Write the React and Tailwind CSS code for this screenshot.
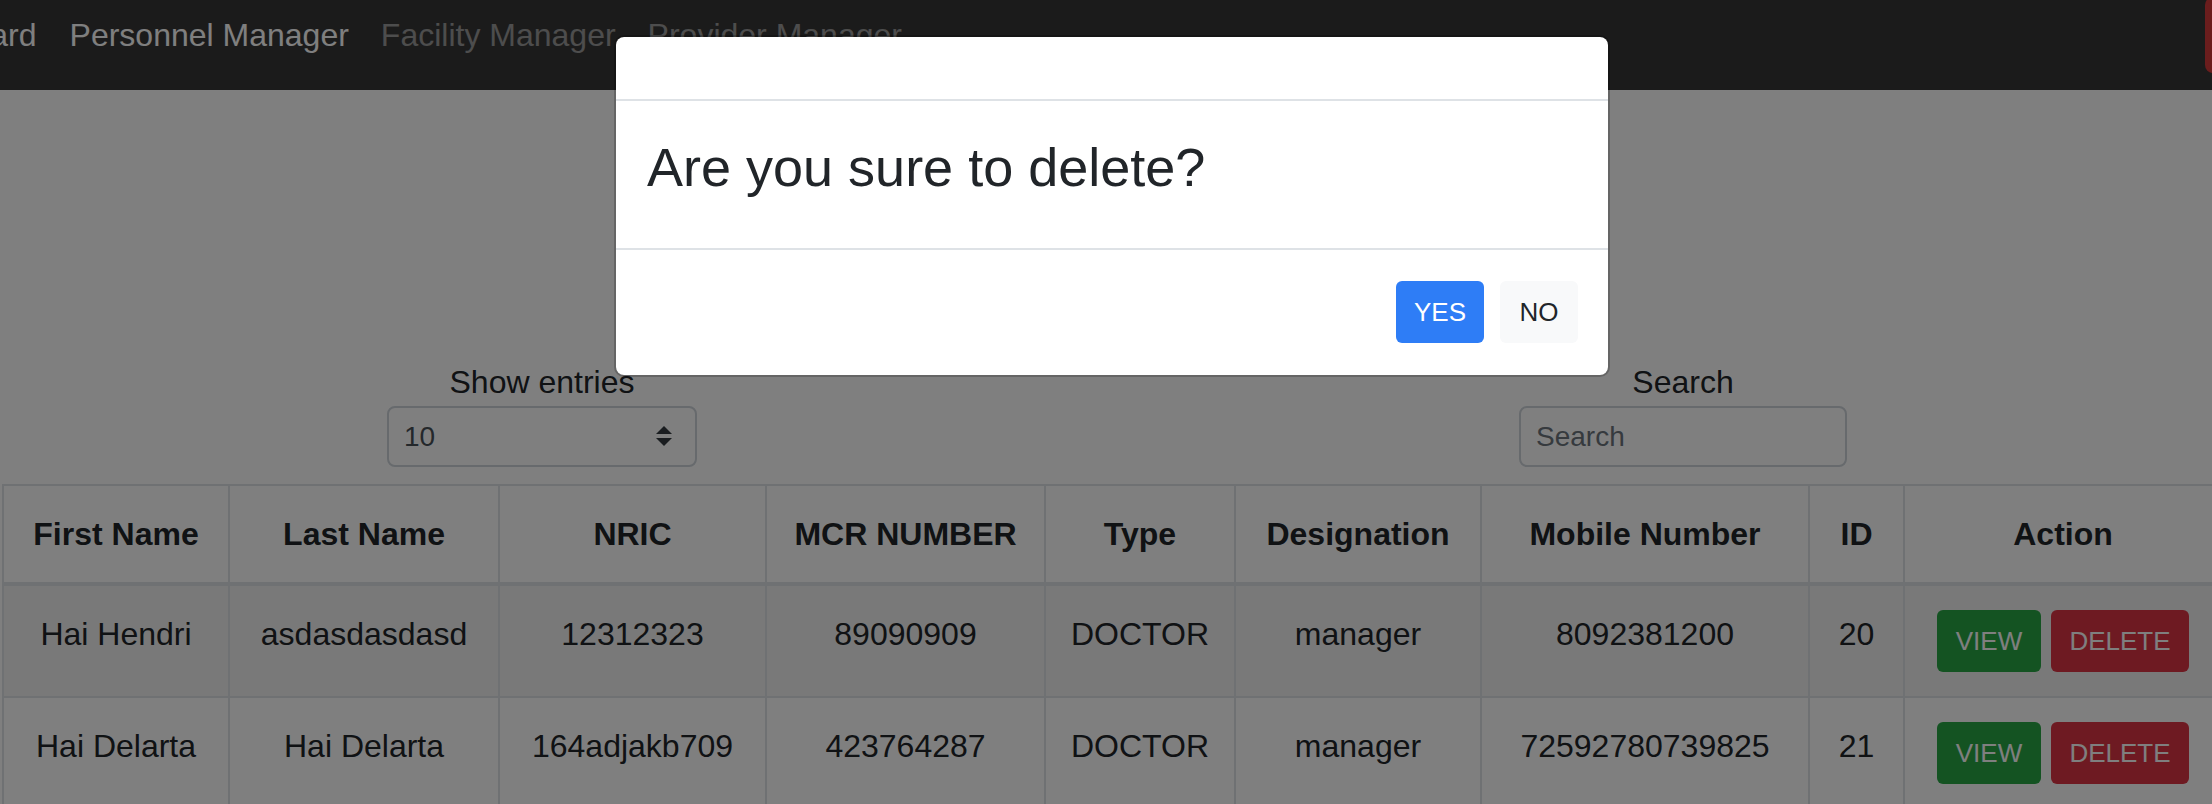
const rows = [
  {
    first: "Hai Hendri",
    last: "asdasdasdasd",
    nric: "12312323",
    mcr: "89090909",
    type: "DOCTOR",
    designation: "manager",
    mobile: "8092381200",
    id: 20,
  },
  {
    first: "Hai Delarta",
    last: "Hai Delarta",
    nric: "164adjakb709",
    mcr: "423764287",
    type: "DOCTOR",
    designation: "manager",
    mobile: "72592780739825",
    id: 21,
  },
];

const columns = [
  { label: "First Name", w: "w-[226px]" },
  { label: "Last Name", w: "w-[270px]" },
  { label: "NRIC", w: "w-[267px]" },
  { label: "MCR NUMBER", w: "w-[279px]" },
  { label: "Type", w: "w-[190px]" },
  { label: "Designation", w: "w-[246px]" },
  { label: "Mobile Number", w: "w-[328px]" },
  { label: "ID", w: "w-[95px]" },
  { label: "Action", w: "w-[318px]" },
];

function Navbar() {
  return (
    <nav className="h-[90px] bg-[#363636] flex items-start pt-[11px] overflow-hidden text-[32px] leading-[48px]">
      {/* Brand + links, page is scrolled a little to the right */}
      <div className="flex -ml-[120px] whitespace-nowrap">
        <span className="text-white pr-[17px]">Dashboard</span>
        <span className="text-white px-[16px]">Personnel Manager</span>
        <span className="text-white/50 px-[16px]">Facility Manager</span>
        <span className="text-white/50 px-[16px]">Provider Manager</span>
      </div>
      {/* Logout button, mostly off screen */}
      <div className="ml-auto -mr-[53px] -mt-[14px] w-[60px] h-[76px] rounded-[8px] bg-[#d63a3a] shrink-0" />
    </nav>
  );
}

function Controls() {
  return (
    <div className="flex items-start text-[#212529]">
      <div className="ml-[387px] w-[310px] flex flex-col items-center">
        <label className="text-[32px] leading-[48px]">Show entries</label>
        <div className="w-full h-[61px] border-2 border-[#ced4da] rounded-[8px] bg-white flex items-center justify-between pl-[15px] pr-[23px] text-[28px] text-[#495057]">
          <span>10</span>
          <svg width="16" height="21" viewBox="0 0 16 21">
            <path d="M8 0 L16 8 L0 8 Z" fill="#343a40" />
            <path d="M0 12 L16 12 L8 20 Z" fill="#343a40" />
          </svg>
        </div>
      </div>
      <div className="ml-[822px] w-[328px] flex flex-col items-center">
        <label className="text-[32px] leading-[48px]">Search</label>
        <div className="w-full h-[61px] border-2 border-[#ced4da] rounded-[8px] bg-white flex items-center pl-[15px] text-[28px] text-[#6c757d]">
          Search
        </div>
      </div>
    </div>
  );
}

function PersonnelTable() {
  return (
    <table className="mt-[17px] ml-[2px] w-[2220px] table-fixed border-collapse text-[32px] leading-[48px] text-[#212529]">
      <thead>
        <tr>
          {columns.map((c) => (
            <th
              key={c.label}
              className={`${c.w} p-[24px] border-2 border-b-4 border-[#dee2e6] font-bold text-center align-bottom whitespace-nowrap`}
            >
              {c.label}
            </th>
          ))}
        </tr>
      </thead>
      <tbody>
        {rows.map((r, i) => (
          <tr key={r.id} className={i % 2 === 0 ? "bg-black/5" : ""}>
            {[r.first, r.last, r.nric, r.mcr, r.type, r.designation, r.mobile, r.id].map((v, j) => (
              <td key={j} className="p-[24px] border-2 border-[#dee2e6] text-center align-top whitespace-nowrap">
                {v}
              </td>
            ))}
            <td className="p-[24px] border-2 border-[#dee2e6] text-center align-top">
              <div className="inline-flex gap-[10px]">
                <button className="w-[104px] h-[62px] rounded-[6px] bg-[#28a745] text-white text-[26px] leading-none">
                  VIEW
                </button>
                <button className="w-[138px] h-[62px] rounded-[6px] bg-[#dc3545] text-white text-[26px] leading-none">
                  DELETE
                </button>
              </div>
            </td>
          </tr>
        ))}
      </tbody>
    </table>
  );
}

function ConfirmModal() {
  return (
    <div className="absolute top-[35px] left-[614px] w-[996px] bg-white rounded-[10px] border-2 border-black/20 bg-clip-padding">
      {/* Empty header */}
      <div className="h-[64px] border-b-2 border-[#dee2e6]" />

      {/* Body */}
      <div className="pt-[34px] pb-[32px] px-[31px]">
        <h3 className="text-[54px] leading-[1.2] mb-[16px] text-[#212529]">Are you sure to delete?</h3>
      </div>

      {/* Footer */}
      <div className="border-t-2 border-[#dee2e6] flex justify-end gap-[16px] pt-[31px] pb-[32px] pr-[30px]">
        <button className="w-[88px] h-[62px] rounded-[6px] bg-[#2e7df6] text-white text-[26px] leading-none">
          YES
        </button>
        <button className="w-[78px] h-[62px] rounded-[6px] bg-[#f8f9fa] text-[#212529] text-[26px] leading-none">
          NO
        </button>
      </div>
    </div>
  );
}

export default function App() {
  return (
    <div
      className="relative w-[2212px] h-[804px] overflow-hidden bg-white"
      style={{ fontFamily: '"Liberation Sans", Arial, sans-serif' }}
    >
      <Navbar />
      <main className="pt-[268px]">
        <Controls />
        <PersonnelTable />
      </main>

      {/* Backdrop */}
      <div className="absolute inset-0 bg-black/50" />
      <ConfirmModal />
    </div>
  );
}
